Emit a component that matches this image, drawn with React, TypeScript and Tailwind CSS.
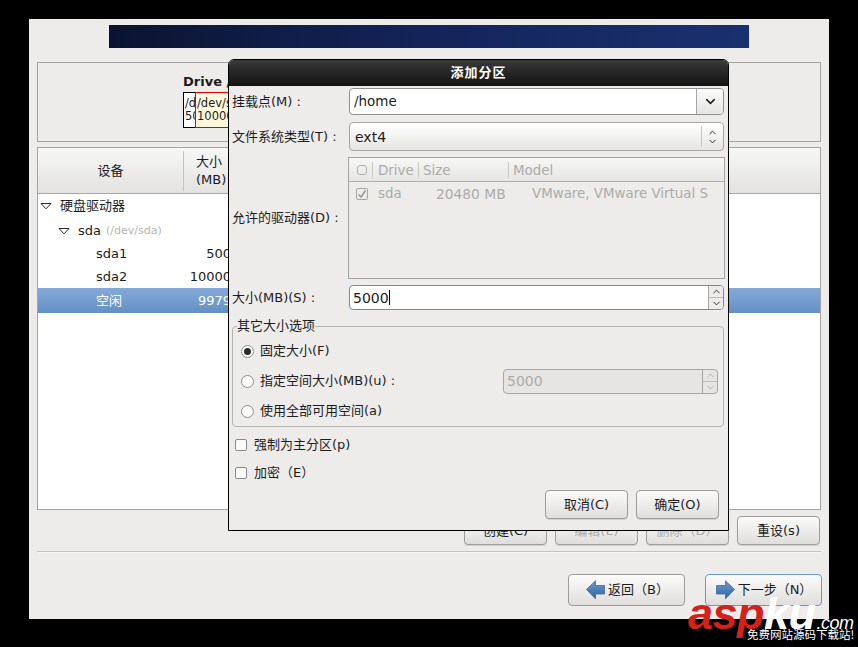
import React from "react";
import { ChevronDown, ChevronUp } from "lucide-react";

const Btn = ({ w, children, disabled }: { w: string; children: React.ReactNode; disabled?: boolean }) => (
  <div
    className={`${w} h-[29px] flex items-center justify-center rounded-[4px] border border-[#9c9c9a] bg-gradient-to-b from-[#fbfbfa] to-[#dfdedc] shadow-[0_1px_0_#d0d0ce] ${
      disabled ? "text-[#ababa9]" : "text-[#1c1c1c]"
    }`}
  >
    {children}
  </div>
);

const Tri = ({ x }: { x: string }) => (
  <svg width="12" height="8" viewBox="0 0 12 8" className={`${x} shrink-0`}>
    <path d="M1 1.5H11L6 6.8Z" fill="white" stroke="#2a2a2a" strokeWidth="1" />
  </svg>
);

const Row = ({ h, children, sel }: { h: string; children: React.ReactNode; sel?: boolean }) => (
  <div className={`${h} flex items-center whitespace-nowrap ${sel ? "bg-gradient-to-b from-[#84a9d8] to-[#6590c4] text-white" : ""}`}>{children}</div>
);

const Radio = ({ on }: { on?: boolean }) => (
  <span className="w-[13px] h-[13px] rounded-full border border-[#8f8f8d] bg-[#fbfbfa] flex items-center justify-center shrink-0">
    {on && <span className="w-[7px] h-[7px] rounded-full bg-[#2a2a2a]" />}
  </span>
);

const Check = () => <span className="w-[12px] h-[12px] rounded-[2px] border border-[#8a8a88] bg-[#fbfbfa] shrink-0" />;

const Arrow = ({ flip }: { flip?: boolean }) => (
  <svg width="19" height="20" viewBox="0 0 19 20" className={`shrink-0 ${flip ? "-scale-x-100" : ""}`}>
    <defs>
      <linearGradient id="ag" x1="0" y1="0" x2="0" y2="1">
        <stop offset="0" stopColor="#6f9bd0" />
        <stop offset="1" stopColor="#2f62a3" />
      </linearGradient>
    </defs>
    <path d="M0.5 9.5L9.5 0.8V5.5H18.5V14H9.5V18.8Z" fill="url(#ag)" stroke="#3a6aa6" strokeWidth="0.8" />
  </svg>
);

const Label = ({ children }: { children: React.ReactNode }) => (
  <div className="w-[116px] shrink-0 whitespace-nowrap -ml-px mr-px">{children}</div>
);

const Spin = ({ dim }: { dim?: boolean }) => (
  <div className={`w-[15px] shrink-0 flex flex-col border-l border-[#a5a5a3] ${dim ? "text-[#a8a8a6]" : "text-[#222]"}`}>
    <div className="flex-1 flex items-center justify-center border-b border-[#bdbdbb]">
      <ChevronUp size={11} strokeWidth={2} />
    </div>
    <div className="flex-1 flex items-center justify-center">
      <ChevronDown size={11} strokeWidth={2} />
    </div>
  </div>
);

export default function App() {
  return (
    <div className="relative w-[858px] h-[647px] overflow-hidden bg-black pt-[19px] pl-[29px] text-[13px] leading-[16px] text-[#1c1c1c] font-['DejaVu_Sans','Noto_Sans_CJK_SC',sans-serif]">
      <div className="w-[800px] h-[600px] bg-[#edecea] flex flex-col pl-[8px] pr-[8px]">
        {/* banner */}
        <div className="mt-[6px] ml-[72px] w-[640px] h-[23px] shrink-0 bg-gradient-to-r from-[#0a1431] via-[#14245a] to-[#1a306f]" />

        {/* drive box */}
        <div className="mt-[14px] h-[80px] shrink-0 border border-[#a3a3a1] pt-[10px] pl-[145px] overflow-hidden">
          <div className="font-bold whitespace-nowrap h-[19px] leading-[18px]">Drive /dev/sda</div>
          <div className="flex h-[36px] text-[11.5px] leading-[13px]">
            <div className="w-[13px] border border-black bg-white overflow-hidden pl-[1px] pt-[4px] whitespace-nowrap">
              /dev/sda1
              <br />
              500
            </div>
            <div className="w-[100px] -ml-px border border-[#e00000] bg-[#fff8dc] overflow-hidden pl-[1px] pt-[4px] whitespace-nowrap">
              /dev/sda2
              <br />
              10000
            </div>
          </div>
        </div>

        {/* device table */}
        <div className="mt-[5px] h-[363px] shrink-0 border border-[#a3a3a1] bg-white flex flex-col">
          <div className="h-[46px] shrink-0 flex items-center bg-gradient-to-b from-[#f7f7f6] to-[#e3e2e0] border-b border-[#a8a8a6]">
            <div className="w-[146px] h-[40px] flex items-center justify-center border-r border-[#c4c4c2]">设备</div>
            <div className="pl-[12px] leading-[18px] whitespace-nowrap">
              大小
              <br />
              (MB)
            </div>
          </div>
          <Row h="h-[24px]">
            <Tri x="ml-[2px]" />
            <span className="ml-[8px]">硬盘驱动器</span>
          </Row>
          <Row h="h-[24px] pt-[2px]">
            <Tri x="ml-[20px]" />
            <span className="ml-[8px]">sda</span>
            <span className="ml-[5px] text-[11px] text-[#b5b5b3]">(/dev/sda)</span>
          </Row>
          <Row h="h-[23px]">
            <span className="ml-[58px] w-[60px]">sda1</span>
            <span className="w-[75px] text-right">500</span>
          </Row>
          <Row h="h-[23px]">
            <span className="ml-[58px] w-[60px]">sda2</span>
            <span className="w-[75px] text-right">10000</span>
          </Row>
          <Row h="h-[25px]" sel>
            <span className="ml-[58px] w-[60px]">空闲</span>
            <span className="w-[75px] text-right">9979</span>
          </Row>
        </div>

        {/* action buttons */}
        <div className="mt-[6px] shrink-0 flex justify-end gap-[8px] pr-px">
          <Btn w="w-[83px]">创建(C)</Btn>
          <Btn w="w-[83px]" disabled>编辑(E)</Btn>
          <Btn w="w-[83px]" disabled>删除（D）</Btn>
          <Btn w="w-[83px]">重设(s)</Btn>
        </div>

        <div className="mt-[6px] h-[2px] shrink-0 border-t border-[#c4c4c2] bg-[#f4f4f2]" />

        {/* nav buttons */}
        <div className="mt-[21px] shrink-0 flex justify-end gap-[20px] -mr-[1px]">
          <div className="w-[117px] h-[32px] flex items-center justify-center gap-[3px] pl-[2px] rounded-[4px] border border-[#9c9c9a] bg-gradient-to-b from-[#fbfbfa] to-[#dfdedc]">
            <Arrow />
            <span>返回（B）</span>
          </div>
          <div className="w-[117px] h-[32px] flex items-center justify-center gap-[3px] pl-[1px] rounded-[4px] border border-[#6d97c9] bg-gradient-to-b from-[#fbfbfa] to-[#dfdedc]">
            <Arrow flip />
            <span>下一步（N）</span>
          </div>
        </div>
      </div>

      {/* dialog */}
      <div className="absolute left-[228px] top-[59px] w-[501px] h-[472px] border border-black rounded-t-[6px] bg-[#edecea] flex flex-col">
        <div className="h-[26px] shrink-0 rounded-t-[5px] bg-gradient-to-b from-[#3a3a3a] to-[#131313] flex items-center justify-center text-white font-bold tracking-[1px]">
          添加分区
        </div>
        <div className="flex-1 flex flex-col px-[4px]">
          {/* mount */}
          <div className="mt-[2px] h-[27px] flex items-center">
            <Label>挂载点(M) :</Label>
            <div className="flex-1 h-full flex rounded-[4px] border border-[#8f8f8d] bg-white overflow-hidden">
              <div className="flex-1 pl-[4px] flex items-center text-[13.5px] -mt-px">/home</div>
              <div className="w-[27px] flex items-center justify-center border-l border-[#a5a5a3] bg-gradient-to-b from-[#fbfbfa] to-[#e6e5e3]">
                <ChevronDown size={15} strokeWidth={2.4} />
              </div>
            </div>
          </div>
          {/* fs */}
          <div className="mt-[7px] h-[29px] flex items-center">
            <Label>文件系统类型(T) :</Label>
            <div className="flex-1 h-full flex items-center rounded-[4px] border border-[#a5a5a3] bg-gradient-to-b from-[#ffffff] to-[#e6e5e3]">
              <div className="flex-1 pl-[5px] text-[14px]">ext4</div>
              <div className="w-[22px] h-[21px] flex flex-col items-center justify-center border-l border-[#c4c4c2]">
                <ChevronUp size={11} strokeWidth={2} className="-mb-[1px]" />
                <ChevronDown size={11} strokeWidth={2} className="-mt-[1px]" />
              </div>
            </div>
          </div>
          {/* drives */}
          <div className="mt-[6px] h-[122px] flex items-center">
            <div className="w-[115px] shrink-0 whitespace-nowrap -ml-px mr-px">允许的驱动器(D) :</div>
            <div className="flex-1 -mr-px h-full border border-[#a3a3a1] text-[#ababa9] text-[13.4px] flex flex-col">
              <div className="h-[24px] shrink-0 flex items-center border-b border-[#b0b0ae] bg-gradient-to-b from-[#f7f7f6] to-[#e6e5e3]">
                <span className="ml-[8px] w-[10px] h-[10px] rounded-[3px] border border-[#b0b0ae]" />
                <span className="ml-[5px] h-[16px] border-l border-[#c8c8c6] pl-[5px] w-[46px] leading-[17px]">Drive</span>
                <span className="h-[16px] border-l border-[#c8c8c6] pl-[4px] w-[90px] leading-[17px]">Size</span>
                <span className="h-[16px] border-l border-[#c8c8c6] pl-[4px] leading-[17px]">Model</span>
              </div>
              <div className="h-[24px] flex items-center whitespace-nowrap overflow-hidden">
                <span className="ml-[7px] w-[12px] h-[12px] rounded-[2px] border border-[#a5a5a3] flex items-center justify-center">
                  <svg width="10" height="10" viewBox="0 0 10 10">
                    <path d="M1.5 5.5L4 8L8.5 1.5" fill="none" stroke="#9a9a98" strokeWidth="1.6" />
                  </svg>
                </span>
                <span className="ml-[10px] w-[58px] leading-[18px]">sda</span>
                <span className="w-[96px] text-[13.8px] leading-[18px]">20480 MB</span>
                <span className="leading-[18px]">VMware, VMware Virtual S</span>
              </div>
            </div>
          </div>
          {/* size */}
          <div className="mt-[6px] h-[25px] flex items-center">
            <Label>大小(MB)(S) :</Label>
            <div className="flex-1 h-full flex rounded-[4px] border border-[#5f8fc8] bg-white overflow-hidden">
              <div className="flex-1 pl-[3px] flex items-center text-[14px]">
                5000<span className="w-px h-[15px] bg-black" />
              </div>
              <div className="w-[15px] flex flex-col border-l border-[#a5a5a3] bg-[#edecea] text-[#222]">
                <div className="flex-1 flex items-center justify-center border-b border-[#bdbdbb]">
                  <ChevronUp size={11} strokeWidth={2} />
                </div>
                <div className="flex-1 flex items-center justify-center">
                  <ChevronDown size={11} strokeWidth={2} />
                </div>
              </div>
            </div>
          </div>
          {/* other options */}
          <fieldset className="mt-[9px] -ml-px h-[108px] border border-[#b4b4b2] rounded-[4px] pl-[8px] pr-[5px] pt-[3px]">
            <legend className="-ml-[4px] h-[14px] leading-[14px]">其它大小选项</legend>
            <div className="h-[30px] flex items-center">
              <Radio on />
              <span className="ml-[6px]">固定大小(F)</span>
            </div>
            <div className="h-[30px] flex items-center">
              <Radio />
              <span className="ml-[6px]">指定空间大小(MB)(u) :</span>
              <div className="ml-auto w-[215px] h-[25px] flex rounded-[4px] border border-[#a8a8a6] bg-[#e6e5e3] overflow-hidden">
                <div className="flex-1 pl-[3px] flex items-center text-[14px] text-[#ababa9]">5000</div>
                <Spin dim />
              </div>
            </div>
            <div className="h-[30px] flex items-center">
              <Radio />
              <span className="ml-[6px]">使用全部可用空间(a)</span>
            </div>
          </fieldset>
          <div className="mt-[8px] h-[20px] flex items-center pl-[2px]">
            <Check />
            <span className="ml-[7px]">强制为主分区(p)</span>
          </div>
          <div className="mt-[8px] h-[20px] flex items-center pl-[2px]">
            <Check />
            <span className="ml-[7px]">加密（E）</span>
          </div>
          <div className="mt-[7px] flex justify-end gap-[8px] pr-[5px]">
            <Btn w="w-[83px]">取消(C)</Btn>
            <Btn w="w-[83px]">确定(O)</Btn>
          </div>
        </div>
      </div>

      {/* watermark */}
      <div className="absolute left-[688px] top-[590px] w-[170px] h-[44px] whitespace-nowrap font-['Liberation_Sans',sans-serif] italic font-bold">
        <div className="flex items-baseline h-[44px] leading-[48px] tracking-[-0.5px]">
          <span className="text-[45px] text-[#d3211c]">asp</span>
          <span className="text-[45px] text-white">ku</span>
          <span className="text-[18px] font-normal text-white ml-px">.com</span>
        </div>
      </div>
      <div className="absolute left-[747px] top-[627px] text-[11.5px] leading-[14px] whitespace-nowrap text-white font-['Noto_Sans_CJK_SC',sans-serif]">
        免费网站源码下载站!
      </div>
    </div>
  );
}
